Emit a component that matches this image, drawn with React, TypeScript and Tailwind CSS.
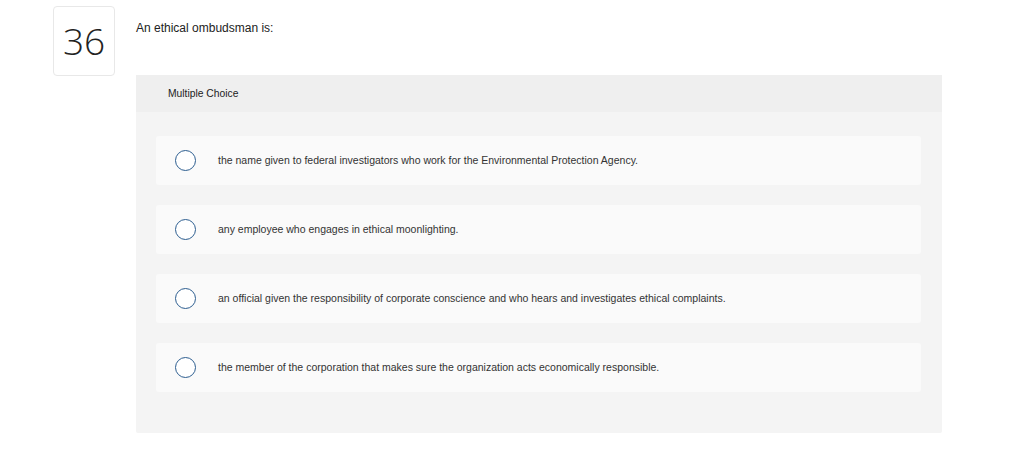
import React from "react";

const choices = [
  "the name given to federal investigators who work for the Environmental Protection Agency.",
  "any employee who engages in ethical moonlighting.",
  "an official given the responsibility of corporate conscience and who hears and investigates ethical complaints.",
  "the member of the corporation that makes sure the organization acts economically responsible.",
];

function Choice({ text }: { text: string }) {
  return (
    <div className="flex h-[49px] items-center rounded-[3px] bg-[#fafafa] pl-[19px]">
      <span className="h-[21px] w-[21px] shrink-0 rounded-full border border-[#2c5d8f] bg-white" />
      <span className="ml-[22px] text-[10.5px] text-[#333]">{text}</span>
    </div>
  );
}

export default function App() {
  return (
    <div
      className="flex h-[466px] w-[1024px] bg-white pl-[53px] pt-[6px]"
      style={{ fontFamily: '"Liberation Sans", Arial, sans-serif' }}
    >
      <div className="flex h-[70px] w-[62px] shrink-0 items-center justify-center rounded-[4px] border border-[#e8e8e8]">
        <span
          className="text-[37px] font-light text-[#222]"
          style={{ fontFamily: '"Open Sans", sans-serif' }}
        >
          36
        </span>
      </div>
      <div className="ml-[21px] flex w-[806px] flex-col">
        <p className="pt-[14px] text-[12px] leading-[16px] text-[#222]">
          An ethical ombudsman is:
        </p>
        <div className="mt-[39px] rounded-[2px] bg-[#f4f4f4] pb-[41px]">
          <div className="flex h-[37px] items-center bg-[#efefef] pl-[32px] text-[10.3px] text-[#222]">
            Multiple Choice
          </div>
          <div className="mt-[24px] flex flex-col gap-[20px] pl-[20px] pr-[21px]">
            {choices.map((c) => (
              <Choice key={c} text={c} />
            ))}
          </div>
        </div>
      </div>
    </div>
  );
}
